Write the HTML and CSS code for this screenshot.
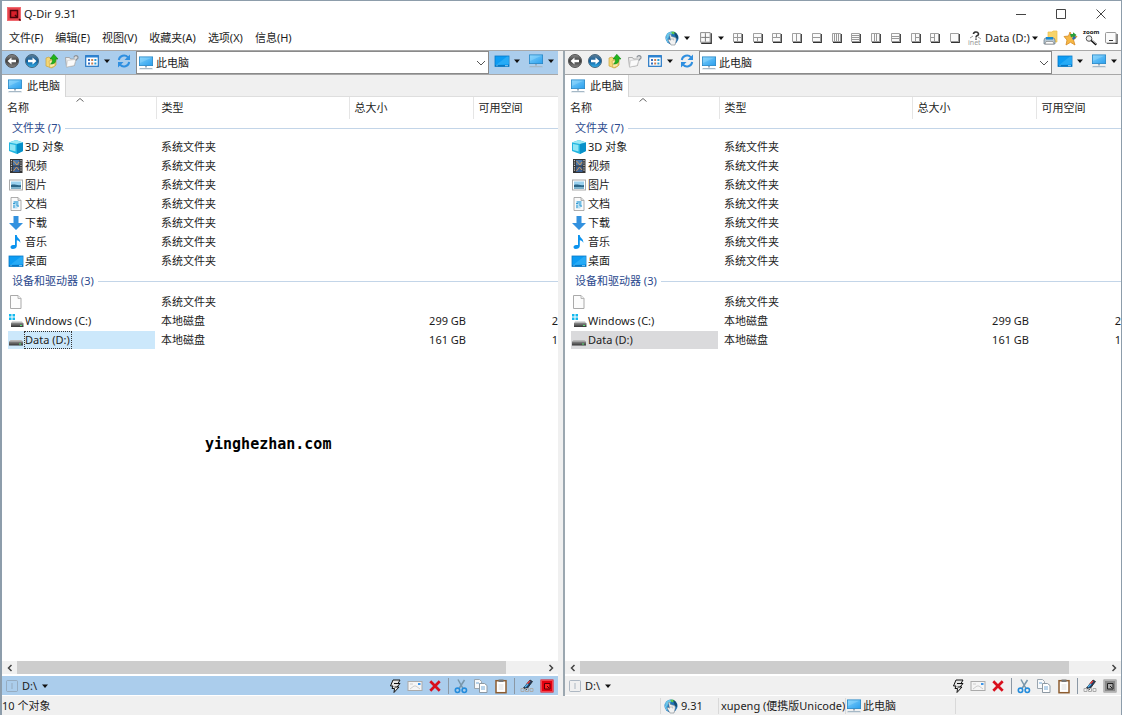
FILE: index.html
```html
<!DOCTYPE html>
<html lang="zh-CN">
<head>
<meta charset="utf-8">
<title>Q-Dir 9.31</title>
<link rel="stylesheet" href="styles.css">
</head>
<body>
<svg class="sprite" aria-hidden="true">
  <defs>
    <linearGradient id="g-dark" x1="0" y1="0" x2="0" y2="1"><stop offset="0" stop-color="#8d8d8d"/><stop offset=".5" stop-color="#3c3c3c"/><stop offset="1" stop-color="#8a8a8a"/></linearGradient>
    <linearGradient id="g-blue" x1="0" y1="0" x2="0" y2="1"><stop offset="0" stop-color="#5f7f96"/><stop offset=".5" stop-color="#0e5d9c"/><stop offset="1" stop-color="#35b4ee"/></linearGradient>
    <linearGradient id="g-screen" x1="0" y1="0" x2="1" y2="1"><stop offset="0" stop-color="#7fd0fb"/><stop offset="1" stop-color="#2a9fee"/></linearGradient>
    <linearGradient id="g-drive" x1="0" y1="0" x2="0" y2="1"><stop offset="0" stop-color="#8b8b8b"/><stop offset="1" stop-color="#333"/></linearGradient>
  </defs>
  <symbol id="logo" viewBox="0 0 16 16"><rect x="1" y="1" width="14" height="14" fill="#e8444c"/><rect x="1.500" y="1.500" width="13" height="13" fill="none" stroke="#f79095" stroke-dasharray="1 1"/><path d="M4.500 4.500h7v7h-7z" fill="#d8202a" stroke="#4a0308" stroke-width="1.500"/><path d="M9 9l2 2M13 13l1.500 1.500" stroke="#4a0308" stroke-width="1.500"/></symbol>
  <symbol id="back" viewBox="0 0 16 16"><circle cx="8" cy="8" r="6.500" fill="url(#g-dark)" stroke="#555"/><path d="M3.500 8l4-3.500v2.300h4.500v2.400H7.500v2.300z" fill="#fff"/></symbol>
  <symbol id="forward" viewBox="0 0 16 16"><circle cx="8" cy="8" r="6.500" fill="url(#g-blue)" stroke="#47677e"/><path d="M12.500 8l-4-3.500v2.300H4v2.400h4.500v2.300z" fill="#fff"/></symbol>
  <symbol id="up" viewBox="0 0 16 16"><path d="M2 5l3-1 1 1h6v7l-4 3-6-2z" fill="#f5d777" stroke="#c9a33c" stroke-width=".7"/><path d="M5 8l6-2v7l-5 2z" fill="#fbe9a8" stroke="#c9a33c" stroke-width=".6"/><path d="M6.500 11c2-1 2-3 1.800-5H6L9.800 1.300 14 6h-2.300c.3 3.500-1 5-5.200 5z" fill="#20b51d" stroke="#118511" stroke-width=".6"/></symbol>
  <symbol id="newfolder" viewBox="0 0 16 16"><path d="M1.500 4.500h4l1 1.500h5l-1 6.500-8 1.500z" fill="#eee" stroke="#999" stroke-width=".8"/><path d="M3.500 7.500l8.500-1-2 6-7.500 1.500z" fill="#fafafa" stroke="#bbb" stroke-width=".5"/><path d="M10 4.500a2 2 0 1 1 4 .2c0 1.500-2 1.300-2 3" fill="#ddd" stroke="#8b9198" stroke-width="1.200"/></symbol>
  <symbol id="views" viewBox="0 0 16 16"><rect x="1.700" y="2.700" width="12.600" height="10.600" fill="#fff" stroke="#2376c4" stroke-width="1.200"/><path d="M2 3.500h12" stroke="#2b83d3" stroke-width="2"/><path d="M4 7h2M4 10.500h2" stroke="#356fc0" stroke-width="2"/><path d="M7.200 7h2M7.200 10.500h2" stroke="#cc7e50" stroke-width="2"/><path d="M10.400 7h2M10.400 10.500h2" stroke="#249ad8" stroke-width="2"/></symbol>
  <symbol id="refresh" viewBox="0 0 16 16"><path d="M2.800 7A5.300 5.300 0 0 1 12 4.300M13.200 9A5.300 5.300 0 0 1 4 11.700" fill="none" stroke="#2f8fe0" stroke-width="2"/><path d="M14 1.500V7H8.500zM2 14.500V9h5.500z" fill="#2f8fe0"/></symbol>
  <symbol id="pc" viewBox="0 0 16 16"><rect x="1.400" y="1.900" width="13.200" height="8.700" fill="url(#g-screen)" stroke="#2586c6" stroke-width=".8"/><path d="M2 2.500h12L2 8z" fill="#a7e2ff" opacity=".35"/><path d="M7 11h2v1.500H7z" fill="#9ab"/><path d="M2 13h12l1 1.300H1z" fill="#a5b8c6"/></symbol>
  <symbol id="desktop" viewBox="0 0 16 16"><rect x="1" y="3" width="14" height="10.500" fill="#0c9cf3" stroke="#0979c5" stroke-width=".8"/><path d="M2 12L13 3.500h2V11z" fill="#41bafa" opacity=".5"/><path d="M1 12.700h14" stroke="#0a6fb6"/><path d="M2.500 12.700h1M11 12.700h3" stroke="#8fcdf5"/></symbol>
  <symbol id="globe" viewBox="0 0 16 16"><circle cx="8" cy="8" r="6.500" fill="#1a73ba"/><path d="M2 6c1-4 5-5 7-4L7 5l-2 1-1 4z" fill="#69c4e8"/><path d="M7 2l3-.5 2 1.500-3 1.500z" fill="#5fc94b"/><path d="M10 2c3 1 4.500 4 4 7l-2-1-1-3z" fill="#174c70"/><path d="M2 6c-.5 4 1 6 3 7z" fill="#6dccf3"/><path d="M5.500 4.500c1-.3 1.500 0 2 2l3 .8c2 .5 2 2 1.500 4L11 15H7L4 10l1-.8 1.500 1z" fill="#f2f2f2" stroke="#78838b" stroke-width=".6"/><path d="M8 8v2M9.700 8.400v2" stroke="#999" stroke-width=".6"/></symbol>
  <symbol id="box" viewBox="0 0 10 10"><path d="M9.300 1v8.300H1" fill="none" stroke="#333" stroke-width="1.200"/><path d="M.5.500h8v8h-8z" fill="#fafafa" stroke="#888" stroke-width=".8"/></symbol>
  <symbol id="folderprint" viewBox="0 0 16 16"><path d="M5 2h4l1-1h4v11H5z" fill="#f7d46b" stroke="#ebbd4e" stroke-width=".7"/><path d="M2 8h9l1 2v4H1v-4z" fill="#b7c7d1" stroke="#627481" stroke-width=".7"/><path d="M3 7h7v2.500H3z" fill="#1689d0"/><path d="M3 11.500h7l1 2.500H2z" fill="#fff" stroke="#777" stroke-width=".6"/></symbol>
  <symbol id="star" viewBox="0 0 16 16"><path d="M7 2l2 4 5 .5-3.500 3.500 1.500 5-4.500-2.700L3 15l1-5L1 6.500 5.500 6z" fill="#f6b844" stroke="#d58a24" stroke-width=".8"/><path d="M7 4h3V2.300L13.500 5 10 8V6.500L8 7.500z" fill="#2b9e3b"/><path d="M9 8l3-2 1 2-3 2z" fill="#276bb5"/></symbol>
  <symbol id="minbox" viewBox="0 0 16 16"><path d="M14 4v9.500H4" stroke="#333" stroke-width="1.200" fill="none"/><rect x="2.500" y="2.500" width="10.500" height="10.500" rx="1" fill="#fbfbfb" stroke="#999"/><path d="M6 10.500h4" stroke="#333"/></symbol>
  <symbol id="cube" viewBox="0 0 16 16"><path d="M1 3.500L8 1l7 2.500V12l-6 3-8-3z" fill="#22b5e0"/><path d="M1 3.500L8 1l7 2.500L9 5z" fill="#9ce9f5"/><path d="M9 5l6-1.500V12l-6 3z" fill="#0790c9"/><path d="M2 5l5.500 1v6.500L2 11z" fill="#8fe6f5"/></symbol>
  <symbol id="film" viewBox="0 0 16 16"><rect x="2" y="1" width="12.500" height="14" fill="#343434"/><path d="M3.500 2v12M13 2v12" stroke="#ccc" stroke-width="1.200" stroke-dasharray="1.200 1.200"/><rect x="5" y="2" width="6.500" height="5.500" fill="#4e79aa"/><rect x="5" y="8.500" width="6.500" height="5.500" fill="#395f93"/><path d="M5.500 3l3.500 4 2-3M5.500 13l3-4 2.500 3" stroke="#d19a54" fill="none"/></symbol>
  <symbol id="picture" viewBox="0 0 16 16"><rect x="1.500" y="3" width="13" height="10" fill="#fff" stroke="#aaa"/><rect x="3" y="4.500" width="10" height="7" fill="#9ad1ef"/><path d="M3 8c3-1.500 6 1 10 0v3.500H3z" fill="#2c6688"/><path d="M3 10h10v1.500H3z" fill="#7db4cf"/></symbol>
  <symbol id="doc" viewBox="0 0 16 16"><path d="M3 1.500h7l3 3v10H3z" fill="#fafafa" stroke="#999" stroke-width=".8"/><path d="M10 1.500v3h3" fill="#ddd" stroke="#999" stroke-width=".7"/><path d="M5 5h6v6H9.500v1.500H5z" fill="#b9e0f5"/><path d="M5 7.500h2V5M9 5v5h2M6 9v3" fill="none" stroke="#349bd1"/></symbol>
  <symbol id="download" viewBox="0 0 16 16"><path d="M5.500 1h5v7H15l-7 7-7-7h4.500z" fill="#3291df"/></symbol>
  <symbol id="music" viewBox="0 0 16 16"><path d="M7 1h1.800c0 3 4 3.500 3.500 8-.7-2-2-2.500-3.500-2.700V12c0 2-2 3-4 3-3 0-3-4 .2-4H7z" fill="#0b93ee"/></symbol>
  <symbol id="file" viewBox="0 0 16 16"><path d="M2.500 1.500h7.500l3 3v10H2.500z" fill="#fcfcfc" stroke="#aaa"/><path d="M10 1.500v3h3" fill="#eee" stroke="#aaa" stroke-width=".8"/></symbol>
  <symbol id="drive" viewBox="0 0 16 16"><path d="M2.500 8h11l1.500 2H1z" fill="#b8b8b8"/><rect x="1" y="9.500" width="14" height="4" fill="url(#g-drive)"/><path d="M11 12h2" stroke="#57e572"/></symbol>
  <symbol id="windrive" viewBox="0 0 16 16"><path d="M1 1h2.500v2.500H1zM4.500 1H7v2.500H4.500zM1 4.500h2.500V7H1zM4.500 4.500H7V7H4.500z" fill="#13b8ee"/><path d="M4 8.500h10l1 1.500H3z" fill="#b8b8b8"/><rect x="3" y="10" width="12.500" height="4" fill="url(#g-drive)"/><path d="M12 12.500h2" stroke="#57e572"/></symbol>
  <symbol id="frame" viewBox="0 0 16 16"><rect x="2.500" y="2.500" width="11" height="11" rx="1" fill="none" stroke="#8b9aaa" stroke-opacity=".65"/><path d="M8 5v6" stroke="#8b9aaa" stroke-opacity=".65"/></symbol>
  <symbol id="bolt" viewBox="0 0 16 16"><path d="M6 2h7l-2 3.500h2L10 9h2l-5 5.500.5-4H5L6 8H3.500z" fill="#e5e5e5" stroke="#111"/><path d="M7 5.500h4M7.500 9H10" stroke="#111"/></symbol>
  <symbol id="mail" viewBox="0 0 16 16"><rect x="1" y="3.500" width="14" height="9" fill="#f5f5f5" stroke="#aaa"/><path d="M3 11l4-3h2l4 3M3 6h3" fill="none" stroke="#ccc"/><rect x="11" y="5" width="2.500" height="2" fill="#3d96e9"/></symbol>
  <symbol id="del" viewBox="0 0 16 16"><path d="M3.300 3.300l9.400 9.400M12.700 3.300l-9.400 9.400" stroke="#d90f1c" stroke-width="2.700"/></symbol>
  <symbol id="cut" viewBox="0 0 16 16"><path d="M5 1.500l5 9M11.500 2L6 10.500" stroke="#7896aa" stroke-width="1.500"/><circle cx="4.500" cy="12.300" r="2.200" fill="none" stroke="#248cdc" stroke-width="1.600"/><circle cx="11.300" cy="12.300" r="2.200" fill="none" stroke="#248cdc" stroke-width="1.600"/></symbol>
  <symbol id="copy" viewBox="0 0 16 16"><path d="M1.500 1.500h5l2 2v7h-7z" fill="#f7f9fb" stroke="#9aa5ae"/><path d="M6.500 5.500h5l2.500 2v7H6.500z" fill="#fff" stroke="#8d99a3"/><path d="M8 9h4M8 11h4M3 5h3" stroke="#74a9d6"/></symbol>
  <symbol id="paste" viewBox="0 0 16 16"><rect x="3" y="2.700" width="10" height="12" fill="#fff" stroke="#8d5c2f" stroke-width="1.500"/><path d="M5.500 1.500h5V4h-5z" fill="#777"/><path d="M5.500 7h5M5.500 9h5M5.500 11h5" stroke="#ddd"/></symbol>
  <symbol id="pen" viewBox="0 0 16 16"><path d="M4.500 10L11 2l2.500 1.500-6 8z" fill="#1d3e66" stroke="#222" stroke-width=".8"/><path d="M8 6l3-3" stroke="#e63c38" stroke-width="1.500"/><path d="M6 9l3-3" stroke="#54b6ef" stroke-width="1.500"/><path d="M2 13.500h3v-3H2zM6.500 13.500h3v-3h-3zM11 13.500h3v-3h-3z" fill="none" stroke="#aaa"/></symbol>
  <symbol id="qred" viewBox="0 0 16 16"><rect x="1.500" y="1.500" width="13" height="13" fill="#e5000f"/><rect x="2.500" y="2.500" width="11" height="11" fill="none" stroke="#ff8a8f" stroke-dasharray="1 1"/><path d="M5.500 5.500h5.500V11H5.500z" fill="#f22" stroke="#5b0007"/><path d="M8 8l2 2" stroke="#5b0007"/></symbol>
  <symbol id="qgray" viewBox="0 0 16 16"><rect x="1.500" y="1.500" width="13" height="13" fill="#888"/><rect x="2.500" y="2.500" width="11" height="11" fill="none" stroke="#ddd" stroke-dasharray="1 1"/><path d="M5.500 5.500h5.500V11H5.500z" fill="#aaa" stroke="#222"/><path d="M8 8l2 2" stroke="#222"/></symbol>
  <symbol id="caret" viewBox="0 0 8 8"><path d="M1 2.500h6L4 6z" fill="#111"/></symbol>
  <symbol id="chev-down" viewBox="0 0 10 10"><path d="M1 3l4 4 4-4" fill="none" stroke="#555"/></symbol>
  <symbol id="chev-left" viewBox="0 0 10 10"><path d="M6.500 2l-3 3 3 3" fill="none" stroke="#444" stroke-width="1.500"/></symbol>
  <symbol id="chev-right" viewBox="0 0 10 10"><path d="M3.500 2l3 3-3 3" fill="none" stroke="#444" stroke-width="1.500"/></symbol>
</svg>

<div class="window">
  <header class="titlebar">
    <svg class="icon"><use href="#logo"/></svg>
    <h1 class="title">Q-Dir 9.31</h1>
    <div class="window-buttons">
      <button class="winbtn" aria-label="最小化"><svg class="winicon" viewBox="0 0 10 10"><path d="M0 5.500h10" stroke="#444"/></svg></button>
      <button class="winbtn" aria-label="最大化"><svg class="winicon" viewBox="0 0 10 10"><path d="M.5.500h9v9h-9z" fill="none" stroke="#444"/></svg></button>
      <button class="winbtn" aria-label="关闭"><svg class="winicon" viewBox="0 0 10 10"><path d="M.5.500l9 9M9.500.500l-9 9" stroke="#444"/></svg></button>
    </div>
  </header>

  <div class="menubar">
    <nav class="menus">
      <button class="menu">文件(F)</button><button class="menu">编辑(E)</button><button class="menu">视图(V)</button><button class="menu">收藏夹(A)</button><button class="menu">选项(X)</button><button class="menu">信息(H)</button>
    </nav>
    <div class="quickbar">
      <button class="tool" aria-label="网络"><svg class="icon"><use href="#globe"/></svg></button>
      <button class="drop" aria-label="网络菜单"><svg class="caret"><use href="#caret"/></svg></button>
      <button class="tool layout-main" aria-label="布局"><svg class="layout-big" viewBox="0 0 10 10"><use href="#box"/><path d="M4.500 1v7M1 4.500h7" stroke="#777" stroke-width=".8"/></svg></button>
      <button class="drop" aria-label="布局菜单"><svg class="caret"><use href="#caret"/></svg></button>
      <div class="layouts">
        <button class="layout" aria-label="布局 1"><svg class="small" viewBox="0 0 10 10"><use href="#box"/><path d="M4.500 1v7M1 4.500h7" stroke="#999"/></svg></button>
        <button class="layout" aria-label="布局 2"><svg class="small" viewBox="0 0 10 10"><use href="#box"/><path d="M4.500 4.500V8M1 4.500h7" stroke="#999"/></svg></button>
        <button class="layout" aria-label="布局 3"><svg class="small" viewBox="0 0 10 10"><use href="#box"/><path d="M4.500 1v3.500M1 4.500h7" stroke="#999"/></svg></button>
        <button class="layout" aria-label="布局 4"><svg class="small" viewBox="0 0 10 10"><use href="#box"/><path d="M4.500 1v7" stroke="#999"/></svg></button>
        <button class="layout" aria-label="布局 5"><svg class="small" viewBox="0 0 10 10"><use href="#box"/><path d="M1 4.500h7" stroke="#999"/></svg></button>
        <button class="layout" aria-label="布局 6"><svg class="small" viewBox="0 0 10 10"><use href="#box"/><path d="M2.500 1v7M4.500 1v7M6.500 1v7" stroke="#999"/></svg></button>
        <button class="layout" aria-label="布局 7"><svg class="small" viewBox="0 0 10 10"><use href="#box"/><path d="M1 2.500h7M1 4.500h7M1 6.500h7" stroke="#999"/></svg></button>
        <button class="layout" aria-label="布局 8"><svg class="small" viewBox="0 0 10 10"><use href="#box"/><path d="M3.500 1v7M5.500 1v7" stroke="#999"/></svg></button>
        <button class="layout" aria-label="布局 9"><svg class="small" viewBox="0 0 10 10"><use href="#box"/><path d="M1 3.500h7M1 5.500h7" stroke="#999"/></svg></button>
        <button class="layout" aria-label="布局 10"><svg class="small" viewBox="0 0 10 10"><use href="#box"/><path d="M4.500 1v7M4.500 4.500H8" stroke="#999"/></svg></button>
        <button class="layout" aria-label="布局 11"><svg class="small" viewBox="0 0 10 10"><use href="#box"/><path d="M4.500 1v7M1 4.500h3.500" stroke="#999"/></svg></button>
        <button class="layout" aria-label="布局 12"><svg class="small" viewBox="0 0 10 10"><use href="#box"/></svg></button>
      </div>
      <button class="tool" aria-label="网络信息"><svg class="icon" viewBox="0 0 16 16"><path d="M6.500 4a2.500 2 0 1 1 3.500 1.800c-1 .4-1 .8-1 1.700M9 8.500v1.200" fill="none" stroke="#333" stroke-width="1.600"/><path d="M3 8l3-2M11 7l3 2" stroke="#999"/><text class="inet-text" x="1" y="15">inet</text></svg></button>
      <label class="drive-pick"><select class="drive-select" aria-label="驱动器"><option>Data (D:)</option></select><svg class="caret"><use href="#caret"/></svg></label>
      <button class="tool" aria-label="打印"><svg class="icon"><use href="#folderprint"/></svg></button>
      <button class="tool" aria-label="收藏"><svg class="icon"><use href="#star"/></svg></button>
      <button class="tool" aria-label="放大"><svg class="icon zoom-icon" viewBox="0 0 16 16"><text class="zoom-text" x="0" y="4">zoom</text><circle cx="6" cy="8.500" r="2.800" fill="#eee" stroke="#555"/><path d="M8.300 10.300l5 4.500" stroke="#111" stroke-width="2.200"/><path d="M9 10l4.300 4" stroke="#ddd" stroke-width=".8"/></svg></button>
      <button class="tool" aria-label="托盘"><svg class="icon"><use href="#minbox"/></svg></button>
    </div>
  </div>

  <main class="panes">
    <section class="pane pane-active">
      <div class="toolbar">
        <button class="tool" aria-label="后退"><svg class="icon"><use href="#back"/></svg></button>
        <button class="tool" aria-label="前进"><svg class="icon"><use href="#forward"/></svg></button>
        <button class="tool" aria-label="向上"><svg class="icon"><use href="#up"/></svg></button>
        <button class="tool" aria-label="新建文件夹"><svg class="icon"><use href="#newfolder"/></svg></button>
        <button class="tool" aria-label="查看"><svg class="icon"><use href="#views"/></svg></button>
        <button class="drop" aria-label="查看菜单"><svg class="caret"><use href="#caret"/></svg></button>
        <button class="tool reload" aria-label="刷新"><svg class="icon"><use href="#refresh"/></svg></button>
        <div class="address">
          <svg class="icon"><use href="#pc"/></svg>
          <input class="address-input" type="text" value="此电脑" aria-label="地址">
          <button class="address-open" aria-label="展开地址"><svg class="chev"><use href="#chev-down"/></svg></button>
        </div>
        <button class="tool" aria-label="桌面"><svg class="icon"><use href="#desktop"/></svg></button>
        <button class="drop" aria-label="桌面菜单"><svg class="caret"><use href="#caret"/></svg></button>
        <button class="tool place" aria-label="此电脑"><svg class="icon"><use href="#pc"/></svg></button>
        <button class="drop" aria-label="此电脑菜单"><svg class="caret"><use href="#caret"/></svg></button>
      </div>
      <div class="tabs"><button class="tab"><svg class="icon"><use href="#pc"/></svg>此电脑</button></div>
      <div class="listing">
        <table class="files">
          <colgroup><col class="col-name"><col class="col-type"><col class="col-size"><col></colgroup>
          <thead><tr><th>名称<svg class="sort" viewBox="0 0 8 4"><path d="M.5 3.500l3.500-3 3.500 3" fill="none" stroke="#666"/></svg></th><th>类型</th><th>总大小</th><th>可用空间</th></tr></thead>
          <tbody>
            <tr class="group"><td colspan="4"><div class="group-line">文件夹 (7)</div></td></tr>
            <tr><td><div class="name"><svg class="icon"><use href="#cube"/></svg><span class="label">3D 对象</span></div></td><td>系统文件夹</td><td></td><td></td></tr>
            <tr><td><div class="name"><svg class="icon"><use href="#film"/></svg><span class="label">视频</span></div></td><td>系统文件夹</td><td></td><td></td></tr>
            <tr><td><div class="name"><svg class="icon"><use href="#picture"/></svg><span class="label">图片</span></div></td><td>系统文件夹</td><td></td><td></td></tr>
            <tr><td><div class="name"><svg class="icon"><use href="#doc"/></svg><span class="label">文档</span></div></td><td>系统文件夹</td><td></td><td></td></tr>
            <tr><td><div class="name"><svg class="icon"><use href="#download"/></svg><span class="label">下载</span></div></td><td>系统文件夹</td><td></td><td></td></tr>
            <tr><td><div class="name"><svg class="icon"><use href="#music"/></svg><span class="label">音乐</span></div></td><td>系统文件夹</td><td></td><td></td></tr>
            <tr><td><div class="name"><svg class="icon"><use href="#desktop"/></svg><span class="label">桌面</span></div></td><td>系统文件夹</td><td></td><td></td></tr>
            <tr class="group group-next"><td colspan="4"><div class="group-line">设备和驱动器 (3)</div></td></tr>
            <tr><td><div class="name"><svg class="icon"><use href="#file"/></svg></div></td><td>系统文件夹</td><td></td><td></td></tr>
            <tr><td><div class="name"><svg class="icon"><use href="#windrive"/></svg><span class="label">Windows (C:)</span></div></td><td>本地磁盘</td><td>299 GB</td><td>2</td></tr>
            <tr class="selected"><td><div class="name"><svg class="icon"><use href="#drive"/></svg><span class="label">Data (D:)</span></div></td><td>本地磁盘</td><td>161 GB</td><td>1</td></tr>
          </tbody>
        </table>
        <p class="watermark">yinghezhan.com</p>
      </div>
      <div class="scrollbar"><button class="scroll-btn" aria-label="向左滚动"><svg class="chev"><use href="#chev-left"/></svg></button><div class="track"><div class="thumb"></div></div><button class="scroll-btn" aria-label="向右滚动"><svg class="chev"><use href="#chev-right"/></svg></button></div>
      <div class="actions">
        <button class="tool" aria-label="窗格"><svg class="icon"><use href="#frame"/></svg></button>
        <button class="path">D:\<svg class="caret"><use href="#caret"/></svg></button>
        <div class="action-icons">
          <button class="tool" aria-label="快速"><svg class="icon"><use href="#bolt"/></svg></button>
          <button class="tool" aria-label="邮件"><svg class="icon"><use href="#mail"/></svg></button>
          <button class="tool" aria-label="删除"><svg class="icon"><use href="#del"/></svg></button>
          <span class="sep"></span>
          <button class="tool" aria-label="剪切"><svg class="icon"><use href="#cut"/></svg></button>
          <button class="tool" aria-label="复制"><svg class="icon"><use href="#copy"/></svg></button>
          <button class="tool" aria-label="粘贴"><svg class="icon"><use href="#paste"/></svg></button>
          <span class="sep"></span>
          <button class="tool" aria-label="重命名"><svg class="icon"><use href="#pen"/></svg></button>
          <button class="tool" aria-label="Q-Dir"><svg class="icon"><use href="#qred"/></svg></button>
        </div>
      </div>
    </section>

    <section class="pane pane-second">
      <div class="toolbar">
        <button class="tool" aria-label="后退"><svg class="icon"><use href="#back"/></svg></button>
        <button class="tool" aria-label="前进"><svg class="icon"><use href="#forward"/></svg></button>
        <button class="tool" aria-label="向上"><svg class="icon"><use href="#up"/></svg></button>
        <button class="tool" aria-label="新建文件夹"><svg class="icon"><use href="#newfolder"/></svg></button>
        <button class="tool" aria-label="查看"><svg class="icon"><use href="#views"/></svg></button>
        <button class="drop" aria-label="查看菜单"><svg class="caret"><use href="#caret"/></svg></button>
        <button class="tool reload" aria-label="刷新"><svg class="icon"><use href="#refresh"/></svg></button>
        <div class="address">
          <svg class="icon"><use href="#pc"/></svg>
          <input class="address-input" type="text" value="此电脑" aria-label="地址">
          <button class="address-open" aria-label="展开地址"><svg class="chev"><use href="#chev-down"/></svg></button>
        </div>
        <button class="tool" aria-label="桌面"><svg class="icon"><use href="#desktop"/></svg></button>
        <button class="drop" aria-label="桌面菜单"><svg class="caret"><use href="#caret"/></svg></button>
        <button class="tool place" aria-label="此电脑"><svg class="icon"><use href="#pc"/></svg></button>
        <button class="drop" aria-label="此电脑菜单"><svg class="caret"><use href="#caret"/></svg></button>
      </div>
      <div class="tabs"><button class="tab"><svg class="icon"><use href="#pc"/></svg>此电脑</button></div>
      <div class="listing">
        <table class="files">
          <colgroup><col class="col-name"><col class="col-type"><col class="col-size"><col></colgroup>
          <thead><tr><th>名称<svg class="sort" viewBox="0 0 8 4"><path d="M.5 3.500l3.500-3 3.500 3" fill="none" stroke="#666"/></svg></th><th>类型</th><th>总大小</th><th>可用空间</th></tr></thead>
          <tbody>
            <tr class="group"><td colspan="4"><div class="group-line">文件夹 (7)</div></td></tr>
            <tr><td><div class="name"><svg class="icon"><use href="#cube"/></svg><span class="label">3D 对象</span></div></td><td>系统文件夹</td><td></td><td></td></tr>
            <tr><td><div class="name"><svg class="icon"><use href="#film"/></svg><span class="label">视频</span></div></td><td>系统文件夹</td><td></td><td></td></tr>
            <tr><td><div class="name"><svg class="icon"><use href="#picture"/></svg><span class="label">图片</span></div></td><td>系统文件夹</td><td></td><td></td></tr>
            <tr><td><div class="name"><svg class="icon"><use href="#doc"/></svg><span class="label">文档</span></div></td><td>系统文件夹</td><td></td><td></td></tr>
            <tr><td><div class="name"><svg class="icon"><use href="#download"/></svg><span class="label">下载</span></div></td><td>系统文件夹</td><td></td><td></td></tr>
            <tr><td><div class="name"><svg class="icon"><use href="#music"/></svg><span class="label">音乐</span></div></td><td>系统文件夹</td><td></td><td></td></tr>
            <tr><td><div class="name"><svg class="icon"><use href="#desktop"/></svg><span class="label">桌面</span></div></td><td>系统文件夹</td><td></td><td></td></tr>
            <tr class="group group-next"><td colspan="4"><div class="group-line">设备和驱动器 (3)</div></td></tr>
            <tr><td><div class="name"><svg class="icon"><use href="#file"/></svg></div></td><td>系统文件夹</td><td></td><td></td></tr>
            <tr><td><div class="name"><svg class="icon"><use href="#windrive"/></svg><span class="label">Windows (C:)</span></div></td><td>本地磁盘</td><td>299 GB</td><td>2</td></tr>
            <tr class="selected"><td><div class="name"><svg class="icon"><use href="#drive"/></svg><span class="label">Data (D:)</span></div></td><td>本地磁盘</td><td>161 GB</td><td>1</td></tr>
          </tbody>
        </table>
      </div>
      <div class="scrollbar"><button class="scroll-btn" aria-label="向左滚动"><svg class="chev"><use href="#chev-left"/></svg></button><div class="track"><div class="thumb"></div></div><button class="scroll-btn" aria-label="向右滚动"><svg class="chev"><use href="#chev-right"/></svg></button></div>
      <div class="actions">
        <button class="tool" aria-label="窗格"><svg class="icon"><use href="#frame"/></svg></button>
        <button class="path">D:\<svg class="caret"><use href="#caret"/></svg></button>
        <div class="action-icons">
          <button class="tool" aria-label="快速"><svg class="icon"><use href="#bolt"/></svg></button>
          <button class="tool" aria-label="邮件"><svg class="icon"><use href="#mail"/></svg></button>
          <button class="tool" aria-label="删除"><svg class="icon"><use href="#del"/></svg></button>
          <span class="sep"></span>
          <button class="tool" aria-label="剪切"><svg class="icon"><use href="#cut"/></svg></button>
          <button class="tool" aria-label="复制"><svg class="icon"><use href="#copy"/></svg></button>
          <button class="tool" aria-label="粘贴"><svg class="icon"><use href="#paste"/></svg></button>
          <span class="sep"></span>
          <button class="tool" aria-label="重命名"><svg class="icon"><use href="#pen"/></svg></button>
          <button class="tool" aria-label="Q-Dir"><svg class="icon"><use href="#qgray"/></svg></button>
        </div>
      </div>
    </section>
  </main>

  <footer class="statusbar">
    <span class="status status-count">10 个对象</span>
    <span class="status status-version"><svg class="icon"><use href="#globe"/></svg>9.31</span>
    <span class="status status-user">xupeng (便携版Unicode)</span>
    <span class="status status-place"><svg class="icon"><use href="#pc"/></svg>此电脑</span>
    <span class="status status-rest"></span>
  </footer>
</div>
</body>
</html>
```
FILE: styles.css
```css
* { box-sizing: border-box; }

body {
  margin: 0;
  background: #8d9dab;
  color: #1c1c1c;
  font: 11px/16px "Noto Sans", "Noto Sans CJK SC", sans-serif;
}

button, input, select {
  margin: 0;
  padding: 0;
  border: 0;
  background: none;
  color: inherit;
  font: inherit;
}

.sprite { position: absolute; width: 0; height: 0; overflow: hidden; }
.icon { width: 16px; height: 16px; flex: none; display: block; }
.caret { width: 8px; height: 8px; flex: none; display: block; }
.chev { width: 10px; height: 10px; display: block; }
.inet-text { font-size: 7px; fill: #999; }
.zoom-icon { overflow: visible; }
.zoom-text { font-size: 6px; font-weight: 700; fill: #111; }

.window {
  height: 100vh;
  display: flex;
  flex-direction: column;
  border: solid #8d9dab;
  border-width: 1px 1px 0 2px;
  background: #fff;
}

/* Title bar */
.titlebar { display: flex; align-items: center; height: 25px; padding-left: 4px; flex: none; }
.title { margin: 0 0 0 2px; font-size: 11px; font-weight: 400; }
.window-buttons { display: flex; margin-left: auto; }
.winbtn { width: 40px; height: 25px; display: grid; place-items: center; }
.winicon { width: 10px; height: 10px; }

/* Menu bar */
.menubar { display: flex; align-items: center; height: 25px; flex: none; border-bottom: 1px solid #a8a8a8; }
.menus { display: flex; padding-left: 1px; }
.menu { padding: 0 6px; white-space: nowrap; }
.quickbar { display: flex; align-items: center; margin-left: auto; }
.layouts { display: flex; width: 237px; margin-left: 2px; }
.layout { flex: 1; height: 20px; display: grid; place-items: center; }
.small { width: 10px; height: 10px; }
.layout-big { width: 12px; height: 12px; }
.layout-main { margin-left: 4px; }
.tool { width: 20px; height: 20px; display: grid; place-items: center; flex: none; }
.drop { width: 10px; height: 20px; display: grid; place-items: center; flex: none; }
.drive-pick { display: flex; align-items: center; width: 56px; }
.drive-select { appearance: none; width: 46px; }

/* Panes */
.panes { flex: 1; min-height: 0; display: flex; gap: 5px; background: #f0f0f0; }
.pane { flex: 1; min-width: 0; display: flex; flex-direction: column; background: #f0f0f0; }
.pane-second { border-left: 2px solid #9ba7b0; }
.toolbar { display: flex; align-items: flex-start; height: 24px; padding-right: 2px; border-bottom: 1px solid #a8a8a8; flex: none; }
.pane-active .toolbar, .pane-active .actions { background: #abcdec; }
.reload { margin-left: 2px; }
.place { margin-left: 4px; }
.address { flex: 1; min-width: 0; height: 23px; margin: 0 3px 0 2px; padding-left: 1px; display: flex; align-items: center; background: #fff; border: 1px solid #8a8a8a; }
.address-input { flex: 1; min-width: 0; margin-left: 2px; outline: 0; }
.address-open { width: 14px; height: 20px; display: grid; place-items: center; }

.tabs { display: flex; height: 22px; flex: none; border-bottom: 1px solid #dedede; }
.tab { display: flex; align-items: center; gap: 4px; height: 22px; padding: 0 5px; background: #fff; border-right: 1px solid #d6d6d6; }

/* File list */
.listing { flex: 1; min-height: 0; overflow: hidden; position: relative; background: #fff; }
.files { width: 100%; table-layout: fixed; border-collapse: collapse; }
.col-name { width: 154px; }
.col-type { width: 193px; }
.col-size { width: 124px; }
.files th { position: relative; height: 22px; padding: 0 5px; text-align: left; font-weight: 400; border-right: 1px solid #e5e5e5; }
.files th:last-child { border-right: 0; }
.sort { position: absolute; top: 1px; left: 74px; width: 8px; height: 4px; }
.files td { height: 19px; padding: 0 0 0 5px; white-space: nowrap; }
.files td:first-child { padding: 0 1px 0 6px; }
.files td:nth-child(3) { padding-right: 7px; text-align: right; }
.files td:nth-child(4) { padding: 0; text-align: right; }
.files .group td { height: 18px; padding: 0 0 0 10px; }
.files .group-next td { height: 22px; }
.group-line { display: flex; align-items: center; gap: 4px; color: #2c4a8e; }
.group-line::after { content: ""; flex: 1; height: 1px; background: #c3d5e8; }
.name { display: flex; align-items: center; height: 18px; }
.label { padding-right: 1px; border: 1px solid transparent; }
.selected .name { background: #dadadc; }
.pane-active .selected .name { background: #cce8fb; }
.pane-active .selected .label { border: 1px dotted #333; }
.watermark { position: absolute; top: 337px; left: 203px; margin: 0; color: #000; font: bold 15px/20px "DejaVu Sans Mono", monospace; }

/* Scroll bar */
.scrollbar { display: flex; height: 13px; flex: none; background: #f0f0f0; }
.scroll-btn { width: 15px; display: grid; place-items: center; }
.track { flex: 1; display: flex; }
.thumb { width: 93%; background: #cdcdcd; }

.actions { display: flex; align-items: center; height: 22px; flex: none; border: solid #fff; border-width: 2px 0 1px; }
.path { display: flex; align-items: center; gap: 4px; }
.action-icons { display: flex; align-items: center; margin-left: auto; padding-right: 1px; }
.sep { width: 6px; height: 16px; display: grid; place-items: center; }
.sep::before { content: ""; width: 1px; height: 16px; background: #8b98a5; }

/* Status bar */
.statusbar { display: flex; align-items: center; height: 19px; flex: none; background: #f0f0f0; }
.status { display: flex; align-items: center; height: 16px; white-space: nowrap; }
.status + .status { border-left: 1px solid #d9d9d9; }
.status-count { flex: 1; }
.status-version { width: 58px; gap: 2px; padding-left: 2px; }
.status-user { width: 127px; padding-left: 2px; }
.status-place { width: 110px; gap: 1px; }
.status-rest { width: 166px; }
```
